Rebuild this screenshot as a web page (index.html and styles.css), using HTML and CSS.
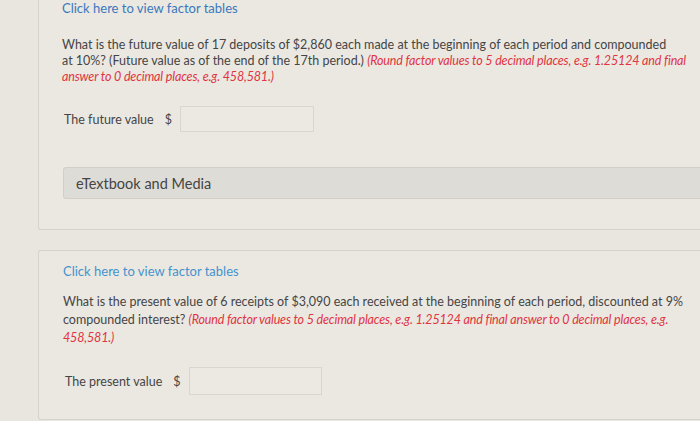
FILE: index.html
```html
<!DOCTYPE html>
<html lang="en">
<head>
    <meta charset="UTF-8">
    <title>factor tables</title>
    <link rel="stylesheet" href="styles.css">
</head>
<body>
    <div class="page">
        <div class="question q_first">
            <a class="q_link" href="#">Click here to view factor tables</a>
            <p class="q_text">What is the future value of 17 deposits of $2,860 each made at the beginning of each period and compounded<br>
                at 10%? (Future value as of the end of the 17th period.) <em class="q_hint">(Round factor values to 5 decimal places, e.g. 1.25124 and final<br>
                answer to 0 decimal places, e.g. 458,581.)</em></p>
            <div class="q_answer">
                <span class="q_label">The future value</span>
                <span class="q_dollar">$</span>
                <input class="q_input" type="text">
            </div>
            <div class="q_media">eTextbook and Media</div>
        </div>
        <div class="question q_second">
            <a class="q_link" href="#">Click here to view factor tables</a>
            <p class="q_text">What is the present value of 6 receipts of $3,090 each received at the beginning of each period, discounted at 9%<br>
                compounded interest? <em class="q_hint">(Round factor values to 5 decimal places, e.g. 1.25124 and final answer to 0 decimal places, e.g.<br>
                458,581.)</em></p>
            <div class="q_answer">
                <span class="q_label">The present value</span>
                <span class="q_dollar">$</span>
                <input class="q_input" type="text">
            </div>
        </div>
    </div>
</body>
</html>
```

FILE: styles.css
```css
html, body {
    margin: 0;
    height: 100%;
    overflow: hidden;
}
body {
    background-color: #e9e6df;
    font-family: Lato, "Open Sans", sans-serif;
    color: #454545;
}
.page {
    padding-left: 38px;
}
.question {
    border: 1px solid #d6d3cc;
    border-right: 0;
    border-radius: 3px 0 0 3px;
    background-color: #ebe8e2;
    padding-left: 23px;
}
.q_first {
    margin-top: -10px;
    padding-top: 9px;
    height: 240px;
    box-sizing: border-box;
}
.q_second {
    margin-top: 20px;
    padding-top: 12px;
    height: 170px;
    box-sizing: border-box;
}
.q_link {
    display: block;
    font-size: 13px;
    line-height: 16px;
    color: #3a78bd;
    text-decoration: none;
}
.q_second .q_link {
    color: #4593cc;
    padding-left: 1px;
}
.q_text {
    margin: 21px 0 0;
    font-size: 12.5px;
    line-height: 16px;
}
.q_second .q_text {
    margin-top: 14px;
    line-height: 18px;
    padding-left: 1px;
    font-size: 12.5px;
}
.q_hint {
    color: #e0343f;
    letter-spacing: -0.15px;
}
.q_answer {
    display: flex;
    align-items: center;
    margin-top: 21px;
    padding-left: 2px;
    font-size: 12.5px;
}
.q_second .q_answer {
    margin-top: 20px;
    padding-left: 3px;
}
.q_dollar {
    margin-left: 11px;
}
.q_input {
    margin-left: 8px;
    width: 134px;
    height: 26px;
    box-sizing: border-box;
    border: 1px solid #d9d6cf;
    background-color: #ece9e3;
    outline: none;
}
.q_second .q_input {
    width: 133px;
    height: 28px;
}
.q_media {
    margin-top: 35px;
    margin-left: 1px;
    height: 32px;
    box-sizing: border-box;
    padding-left: 12px;
    display: flex;
    align-items: center;
    background-color: #dedcd6;
    border: 1px solid #d2cfc9;
    border-right: 0;
    border-radius: 3px 0 0 3px;
    font-size: 14.5px;
    color: #444;
}
```
